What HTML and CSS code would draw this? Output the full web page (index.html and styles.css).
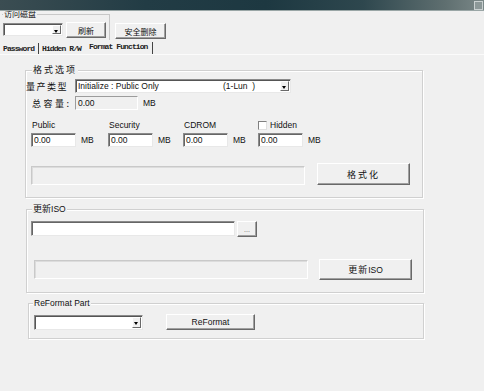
FILE: index.html
```html
<!DOCTYPE html>
<html lang="zh-CN">

<head>
  <meta charset="UTF-8">
  <title>Format Function</title>
  <link rel="stylesheet" href="styles.css">
</head>

<body>
  <div class="titlebar"><span class="sysbtn"></span></div>

  <div class="toolbar">
    <fieldset class="disk">
      <legend>访问磁盘</legend>
      <div class="disk-row">
        <div class="combo combo-disk"><span class="arrow"></span></div>
        <button class="btn btn-refresh">刷新</button>
      </div>
    </fieldset>
    <button class="btn btn-erase">安全删除</button>
  </div>

  <div class="tabs">
    <span class="tab tab-pass">Password</span>
    <span class="tab tab-hidden">Hidden R/W</span>
    <span class="tab tab-active">Format Function</span>
  </div>

  <div class="panel">
    <fieldset class="group g-format">
      <legend class="cjk">格式选项</legend>
      <div class="row row-type">
        <span class="cjk lbl-type">量产类型</span>
        <div class="combo combo-type">
          <span class="opt">Initialize : Public Only</span>
          <span>(1-Lun&nbsp; )</span>
          <span class="arrow"></span>
        </div>
      </div>
      <div class="row row-total">
        <span class="cjk lbl-total">总容量:</span>
        <div class="field disabled w-total">0.00</div>
        <span class="unit">MB</span>
      </div>
      <div class="parts">
        <span class="part-lbl">Public</span>
        <span class="part-lbl">Security</span>
        <span class="part-lbl">CDROM</span>
        <span class="part-lbl check-lbl"><span class="check"></span>Hidden</span>
        <div class="part"><div class="field w-part">0.00</div><span class="unit">MB</span></div>
        <div class="part"><div class="field w-part">0.00</div><span class="unit">MB</span></div>
        <div class="part"><div class="field w-part">0.00</div><span class="unit">MB</span></div>
        <div class="part"><div class="field w-part">0.00</div><span class="unit">MB</span></div>
      </div>
      <div class="row row-action">
        <div class="progress"></div>
        <button class="btn btn-big cjk">格式化</button>
      </div>
    </fieldset>

    <fieldset class="group g-iso">
      <legend><span class="cjk">更新</span>ISO</legend>
      <div class="row row-file">
        <div class="field w-file"></div>
        <button class="btn btn-browse">...</button>
      </div>
      <div class="row row-iso">
        <div class="progress"></div>
        <button class="btn btn-big btn-iso"><span class="cjk">更新</span>ISO</button>
      </div>
    </fieldset>

    <fieldset class="group g-reformat">
      <legend>ReFormat Part</legend>
      <div class="row row-reformat">
        <div class="combo combo-part"><span class="arrow"></span></div>
        <button class="btn btn-reformat">ReFormat</button>
      </div>
    </fieldset>
  </div>
</body>

</html>
```

FILE: styles.css
```css
:root {
  --face: #f0f0f0;
  --edge: #d0d0d0;
  --dark: #696969;
  --shadow: #a0a0a0;
}

* {
  box-sizing: border-box;
}

html,
body {
  margin: 0;
  width: 484px;
  height: 391px;
  overflow: hidden;
  background: var(--face);
  font-family: "Liberation Sans", Arial, sans-serif;
  font-size: 8.5px;
  color: #111;
}

.cjk {
  font-family: "Noto Sans CJK SC", "Liberation Sans", sans-serif;
}

/* title strip */
.titlebar {
  height: 11px;
  position: relative;
  background: linear-gradient(90deg, #3b4d52 0%, #223c45 30%, #1d3841 55%, #2e474e 75%, #5f6f70 92%, #7b8888 100%);
  border-bottom: 1px solid #9aa6a6;
}

.sysbtn {
  position: absolute;
  right: 1px;
  top: 1px;
  width: 9px;
  height: 9px;
  border: 1px solid #c9d0d0;
  background: #8c9898;
}

/* top toolbar */
.toolbar {
  display: flex;
  align-items: flex-start;
  margin-top: -2px;
  height: 32px;
}

.disk {
  margin: 0 0 0 2px;
  padding: 3px 0 0 1px;
  width: 108px;
  height: 31px;
  border: 0;
  border-top: 1px solid #c8c8c8;
  border-right: 1px solid #c8c8c8;
  min-width: 0;

  & legend {
    font-family: "Noto Sans CJK SC", sans-serif;
    font-size: 8px;
    line-height: 10px;
    padding: 0 1px;
    background: var(--face);
  }
}

.disk-row {
  display: flex;
  align-items: flex-start;
}

.btn {
  margin: 0;
  padding: 0;
  font: inherit;
  color: #111;
  background: var(--face);
  border: 1px solid;
  border-color: #fff var(--dark) var(--dark) #fff;
  box-shadow: inset -1px -1px 0 var(--shadow);
  display: flex;
  align-items: center;
  justify-content: center;
}

.btn-refresh {
  margin-left: 3px;
  width: 40px;
  height: 16px;
  font-family: "Noto Sans CJK SC", sans-serif;
  font-size: 8px;
}

.btn-erase {
  margin: 14px 0 0 5px;
  width: 51px;
  height: 16px;
  font-family: "Noto Sans CJK SC", sans-serif;
  font-size: 8px;
}

.combo {
  position: relative;
  display: flex;
  align-items: center;
  background: #fff;
  border: 1px solid;
  border-color: #8a8a8a #e8e8e8 #e8e8e8 #8a8a8a;
  box-shadow: inset 1px 1px 0 #555;
  padding-left: 2px;

  & .arrow {
    position: absolute;
    right: 1px;
    top: 1px;
    bottom: 1px;
    width: 9px;
    background: var(--face);
    border: 1px solid;
    border-color: #fff var(--dark) var(--dark) #fff;

    &::after {
      content: "";
      position: absolute;
      left: 1px;
      top: 4px;
      border: 2.5px solid transparent;
      border-top: 3px solid #000;
      border-bottom: 0;
    }
  }
}

.combo-disk {
  margin-top: 1px;
  width: 60px;
  height: 13px;
}

/* tab strip */
.tabs {
  display: flex;
  align-items: flex-end;
  height: 13px;
  margin-top: 1px;
  border-bottom: 1px solid #fbfbfb;
  font-family: "Liberation Mono", "DejaVu Sans Mono", monospace;
  font-size: 8px;
  font-weight: bold;
  letter-spacing: -0.9px;
  color: #222;
}

.tab {
  line-height: 11px;
  padding-left: 3px;
}

.tab-pass {
  width: 39px;
  border-right: 1px solid #444;
}

.tab-hidden {
  width: 47px;
}

.tab-active {
  align-self: stretch;
  line-height: 9px;
  width: 67px;
  border-right: 1px solid #444;
}

/* group boxes */
.group {
  margin: 0;
  padding: 0;
  min-width: 0;
  border: 1px solid var(--edge);
  box-shadow: inset 1px 1px 0 #fff, 1px 1px 0 #fff;

  & legend {
    padding: 0 1px;
    line-height: 12px;
    background: var(--face);
  }
}

.row {
  display: flex;
  align-items: center;
}

.field {
  height: 14px;
  line-height: 12px;
  padding-left: 2px;
  background: #fff;
  border: 1px solid;
  border-color: #8a8a8a #e8e8e8 #e8e8e8 #8a8a8a;
  box-shadow: inset 1px 1px 0 #666;

  &.disabled {
    background: var(--face);
    box-shadow: none;
    border-color: #9c9c9c #fff #fff #9c9c9c;
  }
}

.unit {
  margin-left: 5px;
}

.progress {
  width: 274px;
  height: 19px;
  border: 1px solid;
  border-color: #c9c9c9 #fff #fff #c9c9c9;
  box-shadow: 1px 1px 0 #dcdcdc inset;
}

.btn-big {
  width: 93px;
  height: 22px;
  font-size: 9px;
  letter-spacing: 2px;
}

.g-format {
  margin: 9px 0 0 25px;
  width: 398px;

  & legend {
    margin-left: 6px;
    font-size: 9px;
    letter-spacing: 2px;
  }
}

.row-type {
  margin-top: 3px;
  height: 14px;
}

.lbl-type {
  width: 49px;
  font-size: 9px;
  letter-spacing: 1.5px;
}

.combo-type {
  width: 216px;
  height: 14px;

  & .opt {
    width: 145px;
  }
}

.row-total {
  margin-top: 3px;
  padding-left: 6px;
  height: 14px;
}

.lbl-total {
  width: 43px;
  font-size: 9px;
  letter-spacing: 2.5px;
}

.w-total {
  width: 63px;
}

.parts {
  margin-top: 9px;
  padding-left: 5px;
  display: grid;
  grid-template-columns: 77px 75px 75px 1fr;
  row-gap: 2px;
}

.part-lbl {
  line-height: 12px;
  padding-left: 1px;
}

.check-lbl {
  display: flex;
  align-items: center;
  padding-left: 0;
}

.check {
  width: 9px;
  height: 9px;
  margin-right: 3px;
  background: #fff;
  border: 1px solid;
  border-color: #808080 #e0e0e0 #e0e0e0 #808080;
}

.part {
  display: flex;
  align-items: center;
}

.w-part {
  width: 45px;
}

.row-action {
  margin-top: 16px;
  padding: 0 0 12px 5px;
  align-items: flex-end;
  gap: 12px;
}

.g-iso {
  margin: 5px 0 0 26px;
  width: 398px;

  & legend {
    margin-left: 5px;
    font-size: 8.5px;
  }

  & legend .cjk {
    font-size: 9px;
  }
}

.row-file {
  margin-top: 6px;
  padding-left: 4px;
  align-items: flex-start;
}

.w-file {
  width: 204px;
  height: 15px;
}

.btn-browse {
  margin-left: 2px;
  width: 20px;
  height: 16px;
  font-size: 7px;
  color: #666;
}

.row-iso {
  margin-top: 22px;
  padding: 0 0 12px 7px;
  gap: 11px;
}

.btn-iso {
  height: 21px;
  font-size: 8.5px;
  letter-spacing: 0;

  & .cjk {
    font-size: 9px;
    letter-spacing: 1px;
  }
}

.g-reformat {
  margin: 4px 0 0 28px;
  width: 396px;

  & legend {
    margin-left: 4px;
  }
}

.row-reformat {
  margin-top: 5px;
  padding: 0 0 8px 5px;
  align-items: flex-end;
  gap: 23px;
}

.combo-part {
  width: 109px;
  height: 15px;
}

.btn-reformat {
  width: 89px;
  height: 16px;
}
```
